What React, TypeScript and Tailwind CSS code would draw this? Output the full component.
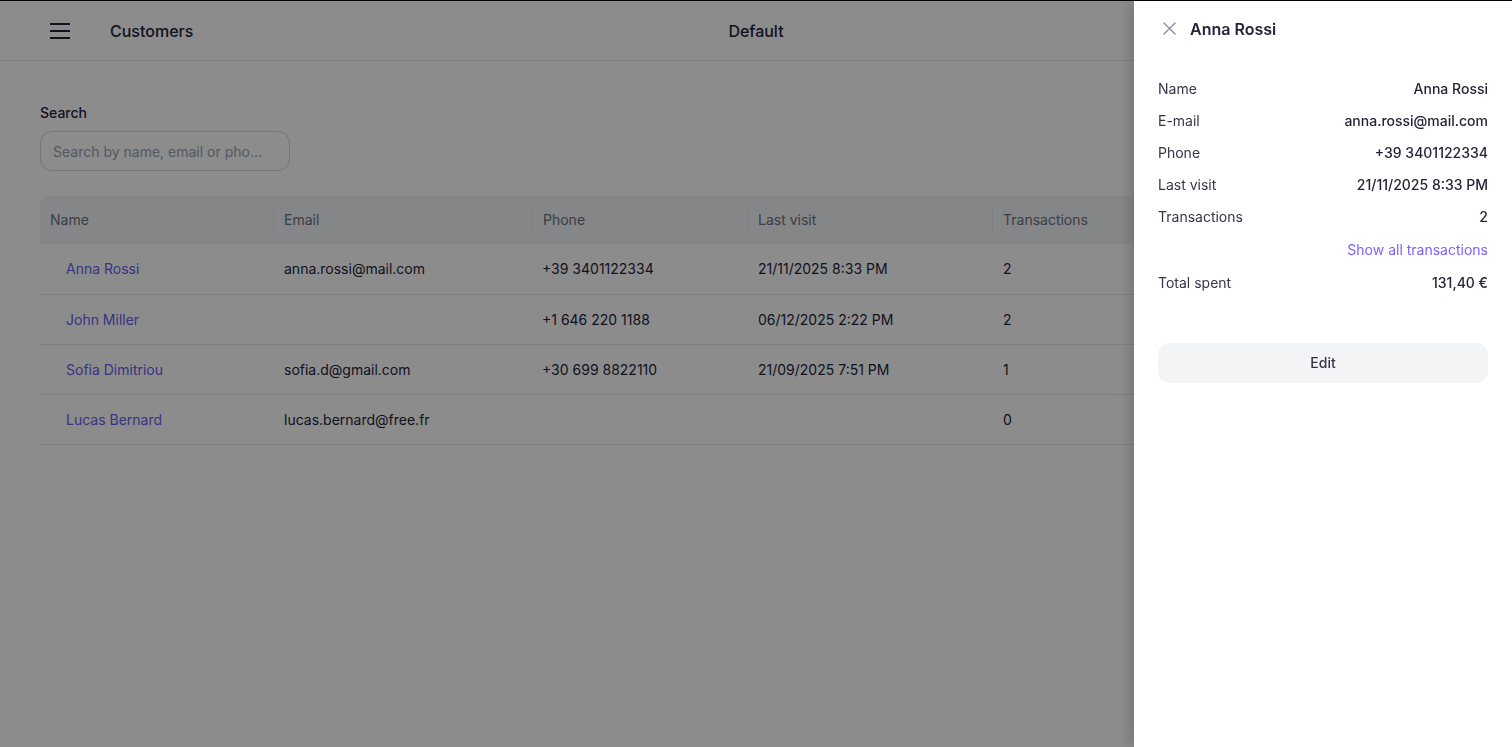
import { useState } from "react";

type Customer = {
  name: string;
  email: string;
  phone: string;
  lastVisit: string;
  transactions: number;
};

const CUSTOMERS: Customer[] = [
  { name: "Anna Rossi", email: "anna.rossi@mail.com", phone: "+39 3401122334", lastVisit: "21/11/2025 8:33 PM", transactions: 2 },
  { name: "John Miller", email: "", phone: "+1 646 220 1188", lastVisit: "06/12/2025 2:22 PM", transactions: 2 },
  { name: "Sofia Dimitriou", email: "sofia.d@gmail.com", phone: "+30 699 8822110", lastVisit: "21/09/2025 7:51 PM", transactions: 1 },
  { name: "Lucas Bernard", email: "lucas.bernard@free.fr", phone: "", lastVisit: "", transactions: 0 },
];

function IconMenu({ className }: { className?: string }) {
  return (
    <svg className={className} viewBox="0 0 20 16" fill="none" stroke="currentColor" strokeWidth="1.8" aria-hidden>
      <path d="M0 1h20M0 8h20M0 15h20" />
    </svg>
  );
}

function IconClose({ className }: { className?: string }) {
  return (
    <svg className={className} viewBox="0 0 14 14" fill="none" stroke="currentColor" strokeWidth="1.4" strokeLinecap="round" aria-hidden>
      <path d="M1 1l12 12M13 1 1 13" />
    </svg>
  );
}

function DetailRow({ label, value }: { label: string; value: string }) {
  return (
    <div className="flex h-8 items-center justify-between">
      <span className="text-[#35354a]">{label}</span>
      <span className="font-medium text-[#24243a]">{value}</span>
    </div>
  );
}

function HeadCell({ label, className }: { label: string; className?: string }) {
  return (
    <th className={`font-normal ${className ?? ""}`}>
      <div className="flex h-6 items-center border-l border-gray-200 pl-[10px]">{label}</div>
    </th>
  );
}

export default function App() {
  const [query, setQuery] = useState("");
  const selected = CUSTOMERS[0];

  return (
    <div className="min-h-[747px] border-t border-black bg-white font-['Inter','Noto_Sans',sans-serif] text-sm text-[#24243a]">
      <header className="relative flex h-[60px] items-center border-b border-gray-200 px-[50px]">
        <button type="button" aria-label="Open menu" className="text-[#24243a]">
          <IconMenu className="h-4 w-5" />
        </button>
        <h1 className="ml-10 text-base font-medium">Customers</h1>
        <div className="absolute left-1/2 -translate-x-1/2 text-base font-medium">Default</div>
      </header>

      <main className="px-10 pt-[43px]">
        <label className="block font-medium leading-[18px]">Search</label>
        <input
          value={query}
          onChange={(e) => setQuery(e.target.value)}
          placeholder="Search by name, email or pho..."
          className="mt-[9px] h-10 w-[250px] rounded-xl border border-gray-300 px-3 text-sm outline-none placeholder:text-gray-400"
        />

        <table className="mt-[25px] w-full border-collapse text-left">
          <thead>
            <tr className="h-12 bg-gray-100 text-gray-500">
              <th className="w-[233px] rounded-tl-lg pl-[10px] font-normal">Name</th>
              <HeadCell label="Email" className="w-[259px]" />
              <HeadCell label="Phone" className="w-[215px]" />
              <HeadCell label="Last visit" className="w-[245px]" />
              <HeadCell label="Transactions" className="rounded-tr-lg" />
            </tr>
          </thead>
          <tbody>
            {CUSTOMERS.map((c) => (
              <tr key={c.name} className="h-[50px] border-b border-gray-200">
                <td className="pl-[26px] pt-px text-[#6c5cf0]">{c.name}</td>
                <td className="pl-[11px] pt-px">{c.email}</td>
                <td className="pl-[10px] pt-px">{c.phone}</td>
                <td className="pl-[11px] pt-px">{c.lastVisit}</td>
                <td className="pl-[11px] pt-px">{c.transactions}</td>
              </tr>
            ))}
          </tbody>
        </table>
      </main>

      <div className="fixed inset-0 top-px bg-black/[0.45]" />

      <aside className="fixed bottom-0 right-0 top-px flex w-[378px] flex-col bg-white px-6 shadow-[-4px_0_14px_rgba(0,0,0,0.18)]">
        <div className="flex h-[55px] items-center gap-[14px] pl-[5px]">
          <button type="button" aria-label="Close" className="text-[#8b8ba0]">
            <IconClose className="h-[13px] w-[13px]" />
          </button>
          <h2 className="text-base font-semibold text-[#24243a]">{selected.name}</h2>
        </div>

        <div className="mt-[17px] flex flex-col">
          <DetailRow label="Name" value={selected.name} />
          <DetailRow label="E-mail" value={selected.email} />
          <DetailRow label="Phone" value={selected.phone} />
          <DetailRow label="Last visit" value={selected.lastVisit} />
          <DetailRow label="Transactions" value={String(selected.transactions)} />
          <div className="flex h-[34px] items-center justify-end">
            <button type="button" className="text-[#7b61ff]">Show all transactions</button>
          </div>
          <DetailRow label="Total spent" value="131,40 €" />
        </div>

        <button
          type="button"
          className="mt-[44px] h-10 w-full rounded-xl bg-gray-100 font-medium text-[#35354a]"
        >
          Edit
        </button>
      </aside>
    </div>
  );
}
